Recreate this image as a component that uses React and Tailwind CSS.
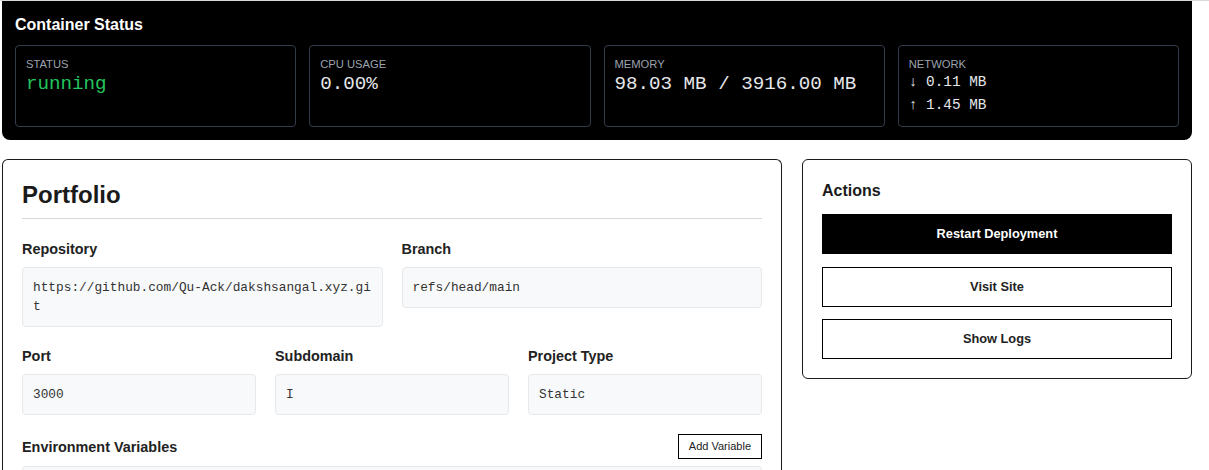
import React from "react";

const sans = { fontFamily: '"Liberation Sans", Arial, sans-serif' };

function StatCard({ label, children }) {
  return (
    <div className="flex-1 h-[82px] rounded-[4px] border border-[#333c4a] px-[10px] pt-[11px]">
      <div className="text-[11.2px] leading-[14px] text-[#9ca3af] uppercase">{label}</div>
      {children}
    </div>
  );
}

function Field({ label, value }) {
  return (
    <div className="flex-1 min-w-0">
      <div className="text-[14.4px] leading-[20px] font-bold text-[#222] mb-[8px]">{label}</div>
      <div
        className="rounded-[4px] border border-[#e6e8eb] bg-[#f8f9fa] pl-[10px] pr-[8px] py-[10px] text-[12.8px] leading-[19px] text-[#333] break-all"
        style={{ fontFamily: '"Liberation Mono", "Courier New", monospace' }}
      >
        {value}
      </div>
    </div>
  );
}

export default function App() {
  const mono = { fontFamily: '"Liberation Mono", "Courier New", monospace' };
  return (
    <div className="min-h-[470px] bg-white" style={sans}>
      <div className="h-px bg-[#d9d9d9]" />
      <div className="ml-[2px] w-[1191px]">
        <div className="w-[1190px] bg-black rounded-b-[8px] px-[13px] pt-[14px] pb-[13px]">
          <h2 className="text-[16px] leading-[20px] font-bold text-white mb-[10px]">Container Status</h2>
          <div className="flex gap-[13px]">
            <StatCard label="Status">
              <div className="mt-[2px] text-[19.2px] leading-[22px] text-[#22c55e]" style={mono}>running</div>
            </StatCard>
            <StatCard label="CPU Usage">
              <div className="mt-[2px] text-[19.2px] leading-[22px] text-[#e5e7eb]" style={mono}>0.00%</div>
            </StatCard>
            <StatCard label="Memory">
              <div className="mt-[2px] text-[19.2px] leading-[22px] text-[#e5e7eb]" style={mono}>98.03 MB / 3916.00 MB</div>
            </StatCard>
            <StatCard label="Network">
              <div className="text-[14.4px] leading-[23px] text-[#e5e7eb]" style={mono}>
                <div>↓ 0.11 MB</div>
                <div>↑ 1.45 MB</div>
              </div>
            </StatCard>
          </div>
        </div>

        <div className="flex gap-[20px] mt-[19px] items-start">
          <div className="w-[780px] h-[330px] rounded-t-[6px] border border-[#1a1a1a] border-b-0 px-[19px] pt-[20px]">
            <h1 className="text-[24px] leading-[29px] font-bold text-[#1a1a1a] pb-[9px] border-b border-[#d5d9de]">Portfolio</h1>
            <div className="flex gap-[19px] mt-[20px]">
              <Field label="Repository" value="https://github.com/Qu-Ack/dakshsangal.xyz.git" />
              <Field label="Branch" value="refs/head/main" />
            </div>
            <div className="flex gap-[19px] mt-[19px]">
              <Field label="Port" value="3000" />
              <Field label="Subdomain" value="I" />
              <Field label="Project Type" value="Static" />
            </div>
            <div className="flex items-center justify-between mt-[19px] mb-[7px]">
              <div className="text-[14.4px] leading-[20px] font-bold text-[#222]">Environment Variables</div>
              <button className="h-[25px] border border-black px-[10px] text-[11px] text-[#222] bg-white">Add Variable</button>
            </div>
            <div className="h-[20px] rounded-t-[4px] border border-[#e6e8eb] bg-[#f8f9fa]" />
          </div>

          <div className="w-[390px] rounded-[6px] border border-[#1a1a1a] px-[19px] pt-[21px] pb-[19px]">
            <h3 className="text-[16px] leading-[20px] font-bold text-[#1a1a1a] mb-[13px]">Actions</h3>
            <div className="flex flex-col gap-[12.5px]">
              <button className="h-[40px] bg-black text-white text-[12.8px] font-bold">Restart Deployment</button>
              <button className="h-[40px] border border-black bg-white text-[#222] text-[12.8px] font-bold">Visit Site</button>
              <button className="h-[40px] border border-black bg-white text-[#222] text-[12.8px] font-bold">Show Logs</button>
            </div>
          </div>
        </div>
      </div>
    </div>
  );
}
